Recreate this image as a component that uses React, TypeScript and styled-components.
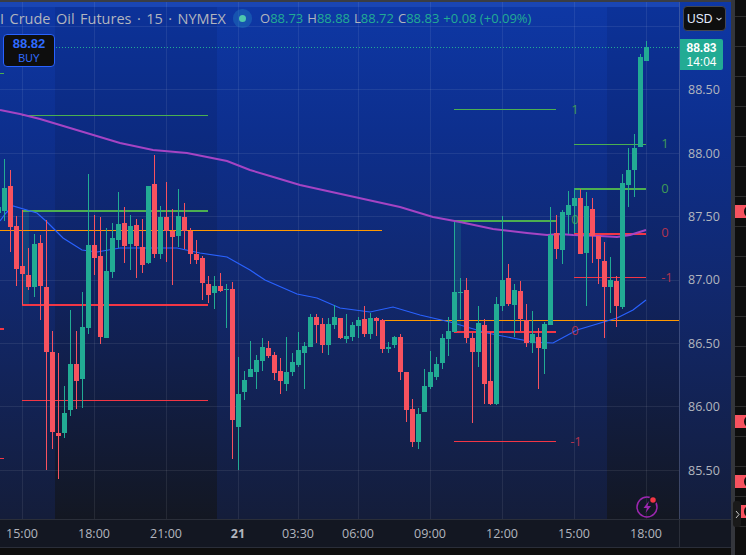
import * as React from 'react'
import styled, { createGlobalStyle } from 'styled-components'

const GlobalStyle = createGlobalStyle`
	html, body {
		margin: 0;
		padding: 0;
		background: #0e0e0e;
		overflow: hidden;
	}
`

const UP = '#22ab94'
const DOWN = '#f7525f'
const FONT = `'Open Sans', 'Liberation Sans', sans-serif`
const BADGE_FONT = `'Liberation Sans', Arial, sans-serif`

// [up?, high, body top, body bottom, low], first candle sits at x=-2, then every 6px
type Candle = [0 | 1, number, number, number, number]
const candles: Candle[] = [
	[1, 200, 207, 213, 221],
	[1, 159, 188, 211, 221], [0, 170, 186, 227, 252], [0, 216, 226, 269, 286], [0, 210, 266, 274, 305],
	[0, 248, 275, 287, 290], [1, 234, 244, 287, 297], [0, 235, 243, 286, 320], [0, 220, 287, 352, 470],
	[0, 331, 352, 432, 449], [0, 353, 433, 436, 479], [1, 386, 413, 433, 438], [1, 310, 364, 410, 416],
	[0, 331, 364, 381, 409], [1, 292, 327, 379, 408], [1, 174, 245, 328, 334], [0, 215, 245, 258, 275],
	[0, 217, 256, 337, 344], [1, 228, 271, 338, 338], [1, 223, 238, 272, 278], [1, 192, 224, 240, 248],
	[0, 207, 223, 246, 263], [1, 215, 226, 244, 270], [0, 219, 225, 246, 278], [0, 219, 247, 265, 273],
	[1, 186, 186, 263, 264], [0, 155, 184, 254, 258], [1, 206, 217, 254, 259], [0, 182, 217, 231, 262],
	[0, 209, 231, 237, 285], [1, 189, 216, 236, 247], [0, 203, 217, 231, 249], [0, 228, 231, 254, 264],
	[0, 240, 254, 260, 264], [0, 256, 258, 283, 300], [0, 276, 284, 295, 303], [1, 276, 286, 293, 309],
	[0, 273, 286, 291, 292], [1, 284, 289, 290, 328], [0, 282, 289, 420, 459], [1, 357, 394, 427, 470],
	[1, 371, 380, 392, 400], [1, 341, 369, 377, 377], [1, 355, 360, 372, 389], [1, 338, 347, 361, 371],
	[0, 341, 348, 356, 358], [0, 352, 355, 373, 380], [0, 358, 371, 381, 394], [1, 337, 372, 384, 391],
	[1, 353, 362, 372, 376], [1, 332, 350, 365, 367], [1, 342, 346, 353, 389], [1, 314, 317, 347, 347],
	[0, 314, 317, 325, 343], [0, 318, 324, 345, 353], [1, 318, 324, 345, 355], [1, 305, 317, 325, 329],
	[0, 318, 318, 338, 339], [1, 314, 336, 339, 343], [1, 322, 325, 337, 341], [1, 317, 320, 326, 338],
	[0, 306, 319, 334, 337], [1, 313, 318, 334, 339], [0, 317, 318, 321, 336], [0, 319, 320, 349, 353],
	[1, 342, 347, 349, 353], [1, 336, 337, 345, 348], [0, 334, 337, 372, 380], [0, 372, 372, 410, 422],
	[0, 399, 409, 442, 447], [1, 408, 414, 442, 449], [1, 369, 386, 412, 412], [1, 351, 372, 387, 389],
	[1, 357, 364, 377, 380], [1, 334, 338, 363, 369], [1, 317, 331, 339, 356], [1, 292, 292, 332, 332],
	[1, 278, 292, 293, 319], [0, 278, 290, 338, 343], [0, 333, 338, 352, 423], [1, 306, 323, 352, 367],
	[0, 319, 325, 384, 404], [0, 332, 381, 404, 405], [1, 297, 304, 404, 405], [1, 216, 280, 306, 311],
	[0, 264, 278, 304, 306], [1, 284, 290, 305, 337], [0, 281, 291, 319, 331], [0, 304, 320, 343, 347],
	[1, 311, 334, 343, 353], [0, 328, 337, 348, 389], [1, 322, 324, 349, 374], [1, 207, 235, 325, 325],
	[0, 215, 233, 249, 259], [1, 210, 212, 250, 264], [1, 191, 205, 215, 234], [1, 188, 198, 206, 225],
	[0, 189, 198, 254, 254], [1, 192, 206, 253, 306], [0, 198, 209, 236, 263], [0, 236, 236, 259, 284],
	[0, 242, 261, 287, 338], [1, 257, 280, 287, 313], [0, 276, 281, 306, 327], [1, 174, 183, 307, 309],
	[1, 148, 170, 185, 207], [1, 134, 148, 170, 197], [1, 54, 57, 147, 147], [1, 41, 47, 61, 61],
]

const purplePoints =
	'0,110 20,114 40,119 70,128 100,137 120,143 153,150 187,153 227,161 250,170 270,176 300,185 350,196 400,207 433,217 460,222 493,229 527,233 547,235 560,234 573,235 600,236 617,237 630,235 646,230'
const bluePoints =
	'0,221 6,213 13,206 37,213 47,222 63,238 82,250 97,252 120,248 177,248 200,253 227,257 250,270 265,280 297,294 317,298 340,308 370,312 393,307 420,315 450,322 487,333 533,342 553,343 577,330 617,318 633,310 646,300'

const gridX = [22, 94, 166, 238, 298, 358, 430, 502, 574, 646]
const gridY = [26, 89, 153, 216, 280, 343, 406, 470]

// x1, x2, y, thickness, colour
const levels: [number, number, number, number, string][] = [
	[22, 208, 115, 1, '#4caf50'],
	[22, 208, 210, 2, '#4caf50'],
	[22, 208, 304, 2, '#f23645'],
	[22, 208, 400, 1, '#f23645'],
	[454, 556, 109, 1, '#4caf50'],
	[454, 556, 220, 2, '#4caf50'],
	[454, 556, 331, 2, '#f23645'],
	[454, 556, 441, 1, '#f23645'],
	[574, 646, 144, 1, '#4caf50'],
	[574, 646, 188, 2, '#4caf50'],
	[574, 646, 233, 2, '#f23645'],
	[574, 646, 277, 1, '#f23645'],
	[0, 4, 73, 1, '#4caf50'],
	[0, 4, 328, 2, '#f23645'],
	[0, 4, 458, 1, '#f23645'],
]

const levelLabels: [number, number, string, 0 | 1][] = [
	[575, 109, '1', 1],
	[575, 219, '0', 1],
	[575, 330, '0', 0],
	[576, 441, '-1', 0],
	[665, 143, '1', 1],
	[665, 188, '0', 1],
	[665, 232, '0', 0],
	[667, 277, '-1', 0],
]

const Page = styled.div`
	display: grid;
	grid-template-columns: 731px 4px 11px;
	width: 746px;
	height: 555px;
	background: #0e0e0e;
	overflow: hidden;
	position: relative;
`

const ChartPanel = styled.div`
	display: grid;
	grid-template-columns: 679px 52px;
	grid-template-rows: 2px 517px 28px 8px;
`

const TopEdge = styled.div`
	grid-column: 1 / 3;
	background: #3a3d44;
`

const Plot = styled.div`
	position: relative;
	overflow: hidden;
`

const ChartSvg = styled.svg`
	display: block;
	position: absolute;
	top: -2px;
	left: 0;
`

const Legend = styled.div`
	position: absolute;
	top: 6px;
	left: 0;
	display: flex;
	align-items: center;
	height: 20px;
	font-family: ${FONT};
	font-size: 13px;
	color: #b2b5be;
	white-space: nowrap;
`

const Title = styled.span`
	font-size: 14.5px;
	word-spacing: 1.7px;
`

const StatusDot = styled.span`
	display: block;
	width: 7px;
	height: 7px;
	margin: 0 14px 0 13px;
	border-radius: 50%;
	background: #4dc7ad;
	box-shadow: 0 0 0 6px rgba(34, 120, 190, 0.45);
`

const Ohlc = styled.span`
	margin-right: 4px;
`

const Value = styled.span`
	color: ${UP};
`

const BuyBadge = styled.div`
	position: absolute;
	top: 32px;
	left: 3px;
	box-sizing: border-box;
	width: 52px;
	height: 33px;
	display: flex;
	flex-direction: column;
	align-items: center;
	justify-content: center;
	border: 1px solid #2962ff;
	border-radius: 4px;
	background: #0e0e0e;
	font-family: ${BADGE_FONT};
	color: #2f6bff;
	line-height: 14px;
`

const BuyPrice = styled.span`
	font-size: 13px;
	font-weight: 700;
`

const BuyLabel = styled.span`
	font-size: 10.5px;
`

const SignalIcon = styled.svg`
	position: absolute;
	right: 18px;
	bottom: 0;
`

const PriceAxis = styled.div`
	position: relative;
	box-sizing: border-box;
	padding-top: 56px;
	border-left: 1px solid rgba(120, 130, 160, 0.4);
	font-family: ${FONT};
	font-size: 12.5px;
	color: #b2b5be;
	background: linear-gradient(180deg, #0e38a6 0%, #0d2f8e 25%, #11286e 55%, #141d3a 100%);
`

const PriceTick = styled.div`
	display: flex;
	align-items: center;
	height: 63.4px;
	padding-left: 8px;
`

const CurrencyButton = styled.div`
	position: absolute;
	top: 4px;
	left: 3px;
	box-sizing: border-box;
	width: 43px;
	height: 25px;
	display: flex;
	align-items: center;
	justify-content: space-between;
	padding: 0 3px 0 3px;
	background: #0e0e0e;
	border: 1px solid #434651;
	border-radius: 4px;
	font-family: ${BADGE_FONT};
	font-size: 12px;
	color: #e3ecff;
`

const LastPrice = styled.div`
	position: absolute;
	top: 37px;
	left: 0;
	width: 43px;
	height: 31px;
	display: flex;
	flex-direction: column;
	align-items: center;
	justify-content: center;
	background: ${UP};
	border-radius: 0 2px 2px 0;
	font-family: ${BADGE_FONT};
	color: #fff;
	font-size: 12px;
	line-height: 14px;
`

const LastValue = styled.span`
	font-weight: 700;
`

const TimeAxis = styled.div`
	display: flex;
	align-items: center;
	border-top: 1px solid #2a2e39;
	box-sizing: border-box;
	background: #131722;
	font-family: ${FONT};
	font-size: 12.5px;
	color: #b2b5be;
	overflow: hidden;
`

const TimeTick = styled.div<{ $w: number; $bold?: boolean }>`
	flex: none;
	width: ${props => props.$w}px;
	text-align: center;
	font-weight: ${props => (props.$bold ? 700 : 400)};

	&:first-child {
		margin-left: -14px;
	}
`

const AxisCorner = styled.div`
	background: #131722;
	border-top: 1px solid #2a2e39;
	border-left: 1px solid #2a2e39;
`

const BottomEdge = styled.div`
	grid-column: 1 / 3;
	border-top: 1px solid #2a2e39;
	background: #0e0e0e;
`

const Divider = styled.div`
	background: #34363c;
`

const SidePanel = styled.div`
	display: flex;
	flex-direction: column;
	padding-top: 16px;
	background: #0e0e0e;
`

const SideRow = styled.div`
	flex: none;
	box-sizing: border-box;
	height: 30px;
	border-top: 1px solid #2e2e2e;
	display: flex;
	align-items: center;
`

const SideTag = styled.div`
	width: 11px;
	height: 13px;
	background: #f7525f;
	position: relative;
	overflow: hidden;

	&::after {
		content: '';
		position: absolute;
		top: 1px;
		left: 9px;
		width: 10px;
		height: 11px;
		border-radius: 50%;
		background: #0e0e0e;
	}
`

const CollapseHandle = styled.div`
	position: absolute;
	left: 733px;
	top: 501px;
	width: 8px;
	height: 26px;
	display: flex;
	align-items: center;
	justify-content: center;
	border-radius: 3px;
	background: #1a1a1a;
`

const times: [string, number, boolean?][] = [
	['15:00', 72],
	['18:00', 72],
	['21:00', 72],
	['21', 72, true],
	['03:30', 48],
	['06:00', 72],
	['09:00', 72],
	['12:00', 72],
	['15:00', 72],
	['18:00', 72],
]

const prices = ['88.50', '88.00', '87.50', '87.00', '86.50', '86.00', '85.50']
const tagRows = [6, 13, 15, 16]

const Chart = () => (
	<ChartSvg width={679} height={519} viewBox="0 0 679 519">
		<defs>
			<linearGradient id="day" x1="0" y1="0" x2="0" y2="1">
				<stop offset="0" stopColor="#0e38a6" />
				<stop offset="0.25" stopColor="#0d2f8e" />
				<stop offset="0.55" stopColor="#11286e" />
				<stop offset="1" stopColor="#141d3a" />
			</linearGradient>
			<linearGradient id="night" x1="0" y1="0" x2="0" y2="1">
				<stop offset="0" stopColor="#0c3299" />
				<stop offset="0.25" stopColor="#0c2a80" />
				<stop offset="0.55" stopColor="#10235f" />
				<stop offset="1" stopColor="#131722" />
			</linearGradient>
		</defs>
		<rect width={679} height={519} fill="url(#day)" />
		<rect y={2} width={679} height={5} fill="#1a46b4" />
		<rect x={55} y={7} width={162} height={512} fill="url(#night)" />
		<rect x={607} y={7} width={72} height={512} fill="url(#night)" />
		<g shapeRendering="crispEdges" stroke="#fff" strokeOpacity={0.08}>
			{gridX.map(x => (
				<line key={x} x1={x + 0.5} x2={x + 0.5} y1={2} y2={519} />
			))}
			{gridY.map(y => (
				<line key={y} x1={0} x2={679} y1={y + 0.5} y2={y + 0.5} />
			))}
		</g>

		<g shapeRendering="crispEdges">
			<rect x={23} y={211} width={6} height={93} fill="#22ab94" opacity={0.18} />
			<rect x={455} y={221} width={6} height={110} fill="#22ab94" opacity={0.18} />
			<rect x={575} y={189} width={6} height={44} fill="#22ab94" opacity={0.18} />
			{levels.map(([x1, x2, y, h, color]) => (
				<rect key={`${x1}-${y}`} x={x1} y={y} width={x2 - x1} height={h} fill={color} />
			))}
			<rect x={22} y={210} width={1} height={94} fill="#f23645" />
			<rect x={454} y={220} width={1} height={111} fill="#22ab94" />
			<rect x={574} y={188} width={1} height={45} fill="#22ab94" />
			<rect x={0} y={230} width={382} height={1} fill="#ff9800" />
			<rect x={382} y={320} width={297} height={1} fill="#ff9800" />
		</g>
		<line x1={56} x2={679} y1={47.5} y2={47.5} stroke={UP} strokeDasharray="1 2" />
		<polyline points={purplePoints} fill="none" stroke="#a544c4" strokeWidth={2} />
		<polyline points={bluePoints} fill="none" stroke="#2962ff" strokeWidth={1.2} />

		{levelLabels.map(([x, y, text, up]) => (
			<text
				key={`${x}-${y}`}
				x={x}
				y={y}
				textAnchor="middle"
				dominantBaseline="central"
				fontFamily="'Open Sans', sans-serif"
				fontSize={13}
				fill={up ? '#3f9a57' : '#b0344f'}
			>
				{text}
			</text>
		))}

		<g shapeRendering="crispEdges">
			{candles.map(([up, high, top, bottom, low], i) => {
				const x = 6 * i - 2
				const color = up ? UP : DOWN
				return (
					<g key={i} fill={color}>
						<rect x={x} y={high} width={1} height={low - high} />
						<rect x={x - 2} y={top} width={5} height={Math.max(bottom - top, 1)} />
					</g>
				)
			})}
		</g>
	</ChartSvg>
)

export default function App() {
	return (
		<Page>
			<GlobalStyle />
			<ChartPanel>
				<TopEdge />
				<Plot>
					<Chart />
					<Legend>
						<Title>I Crude Oil Futures · 15 · NYMEX</Title>
						<StatusDot />
						<Ohlc>O<Value>88.73</Value></Ohlc>
						<Ohlc>H<Value>88.88</Value></Ohlc>
						<Ohlc>L<Value>88.72</Value></Ohlc>
						<Ohlc>C<Value>88.83</Value></Ohlc>
						<Value>+0.08 (+0.09%)</Value>
					</Legend>
					<BuyBadge>
						<BuyPrice>88.82</BuyPrice>
						<BuyLabel>BUY</BuyLabel>
					</BuyBadge>
					<SignalIcon width={26} height={26} viewBox="0 0 26 26">
						<circle cx={12} cy={14} r={10} fill="none" stroke="#9c27b0" strokeWidth={1.5} />
						<path d="M14 8 L8.5 15 H12 L10.5 20 L16 13 H12.5 Z" fill="#9c27b0" />
						<circle cx={18} cy={7} r={3.5} fill="#f23645" stroke="#131722" strokeWidth={1.5} />
					</SignalIcon>
				</Plot>
				<PriceAxis>
					<CurrencyButton>
						USD
						<svg width={6} height={4} viewBox="0 0 6 4">
							<path d="M0.5 0.8 L3 3 L5.5 0.8" fill="none" stroke="#d1d4dc" strokeWidth={1.1} />
						</svg>
					</CurrencyButton>
					<LastPrice>
						<LastValue>88.83</LastValue>
						<span>14:04</span>
					</LastPrice>
					{prices.map(price => (
						<PriceTick key={price}>{price}</PriceTick>
					))}
				</PriceAxis>
				<TimeAxis>
					{times.map(([label, w, bold], i) => (
						<TimeTick key={i} $w={w} $bold={bold}>
							{label}
						</TimeTick>
					))}
				</TimeAxis>
				<AxisCorner />
				<BottomEdge />
			</ChartPanel>
			<Divider />
			<SidePanel>
				{Array.from({ length: 18 }, (_, i) => (
					<SideRow key={i}>{tagRows.includes(i) && <SideTag />}</SideRow>
				))}
			</SidePanel>
			<CollapseHandle>
				<svg width={5} height={9} viewBox="0 0 5 9">
					<path d="M1 1 L4 4.5 L1 8" fill="none" stroke="#c8c8c8" strokeWidth={1} />
				</svg>
			</CollapseHandle>
		</Page>
	)
}
